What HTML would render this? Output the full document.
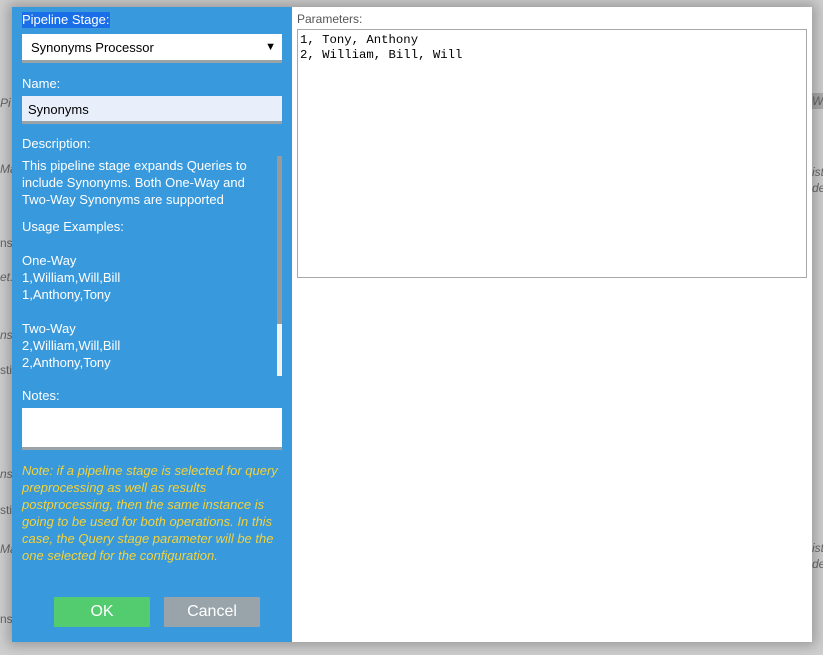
<!DOCTYPE html>
<html><head><meta charset="utf-8"><style>
*{box-sizing:border-box;margin:0;padding:0}
body{width:823px;height:655px;overflow:hidden;background:#cfcfcf;font-family:"Liberation Sans",sans-serif;position:relative}
.bgt{position:absolute;color:#666;font-style:italic;font-size:12px}
.dlg{position:absolute;left:12px;top:7px;width:800px;height:635px;background:#fff;box-shadow:0 0 12px 4px rgba(0,0,0,.25)}
.left{position:absolute;left:0;top:0;width:280px;height:635px;background:#3899dc;color:#fff;font-size:13px}
.lbl{position:absolute;left:10px}
.sel{position:absolute;left:10px;top:27px;width:260px;height:29px;background:#fff;border-bottom:3px solid #9aa3a8;color:#000;font-size:13px;padding:6px 9px}
.inp{position:absolute;left:10px;top:89px;width:260px;height:28px;background:#e8eefa;border-bottom:3px solid #9aa3a8;color:#000;font-size:13px;padding:6px 6px}
.desc{position:absolute;left:10px;top:150px;width:250px;line-height:17px;font-size:13px}
.sb{position:absolute;left:265px;top:149px;width:5px;height:220px;background:#f2f2f2}
.sb i{position:absolute;left:0;top:0;width:5px;height:168px;background:#9a9a9a}
.notes{position:absolute;left:10px;top:401px;width:260px;height:42px;background:#fff;border-bottom:3px solid #9aa3a8}
.note{position:absolute;left:10px;top:455px;width:262px;color:#f3d23c;font-style:italic;font-size:13px;line-height:17px}
.btn{position:absolute;top:590px;width:96px;height:30px;color:#fff;font-size:16px;text-align:center;line-height:30px}
.ta{position:absolute;left:285px;top:22px;width:510px;height:249px;border:1px solid #a8a8a8;font-family:"Liberation Mono",monospace;font-size:12.3px;line-height:15px;padding:3px 2px;color:#000}
</style></head><body>
<div class="bgt" style="left:0;top:96px">Pi</div>
<div class="bgt" style="left:0;top:162px">Ma</div>
<div class="bgt" style="left:0;top:236px;font-style:normal">ns</div>
<div class="bgt" style="left:0;top:270px">et.</div>
<div class="bgt" style="left:0;top:328px">ns</div>
<div class="bgt" style="left:0;top:363px;font-style:normal">sti</div>
<div class="bgt" style="left:0;top:467px">ns</div>
<div class="bgt" style="left:0;top:503px;font-style:normal">sti</div>
<div class="bgt" style="left:0;top:542px">Ma</div>
<div class="bgt" style="left:0;top:612px;font-style:normal">ns</div>
<div style="position:absolute;left:812px;top:93px;width:11px;height:16px;background:#aaa"></div>
<div class="bgt" style="left:812px;top:94px">W</div>
<div class="bgt" style="left:812px;top:165px">ist</div>
<div class="bgt" style="left:812px;top:181px">de</div>
<div class="bgt" style="left:812px;top:541px">ist</div>
<div class="bgt" style="left:812px;top:557px">de</div>
<div class="dlg">
 <div class="left">
  <div class="lbl" style="top:5px;background:#1a6fe8;padding:0 1px 0 0;line-height:16px">Pipeline Stage:</div>
  <div class="sel">Synonyms Processor<span style="position:absolute;right:6px;top:7px;font-size:11px">▼</span></div>
  <div class="lbl" style="top:69px">Name:</div>
  <div class="inp">Synonyms</div>
  <div class="lbl" style="top:129px">Description:</div>
  <div class="desc">This pipeline stage expands Queries to include Synonyms. Both One-Way and Two-Way Synonyms are supported<br><div style="height:10px"></div>Usage Examples:<br><br>One-Way<br>1,William,Will,Bill<br>1,Anthony,Tony<br><br>Two-Way<br>2,William,Will,Bill<br>2,Anthony,Tony</div>
  <div class="sb"><i></i></div>
  <div class="lbl" style="top:381px">Notes:</div>
  <div class="notes"></div>
  <div class="note">Note: if a pipeline stage is selected for query preprocessing as well as results postprocessing, then the same instance is going to be used for both operations. In this case, the Query stage parameter will be the one selected for the configuration.</div>
  <div class="btn" style="left:42px;background:#52cc6f">OK</div>
  <div class="btn" style="left:152px;background:#98a4aa">Cancel</div>
 </div>
 <div style="position:absolute;left:285px;top:5px;font-size:12px;color:#555">Parameters:</div>
 <div class="ta">1, Tony, Anthony<br>2, William, Bill, Will</div>
</div>
</body></html>
